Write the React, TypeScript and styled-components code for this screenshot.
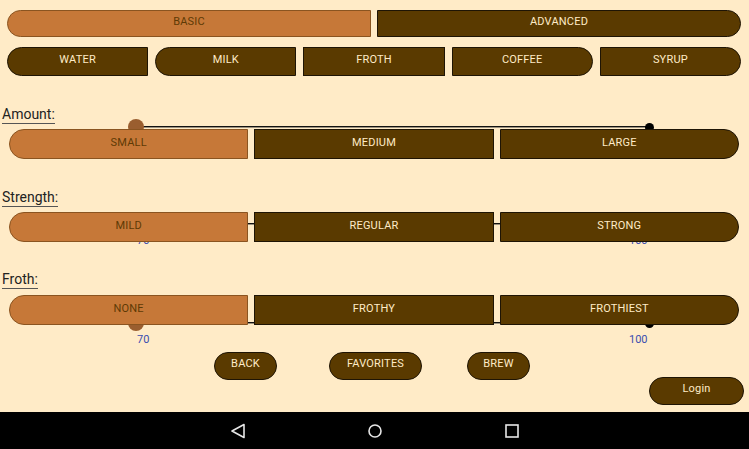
import React from 'react';
import styled, { createGlobalStyle, css } from 'styled-components';

const CREAM = '#FFEBC7';
const ORANGE = '#C67838';
const BROWN = '#5A3A00';
const INK = '#5E3A05';

type Round = 'left' | 'right' | 'none';

const GlobalStyle = createGlobalStyle`
  html, body {
    margin: 0;
    padding: 0;
    background: ${CREAM};
  }
  body {
    font-family: Roboto, "Noto Sans", "Liberation Sans", sans-serif;
  }
  * {
    box-sizing: border-box;
  }
`;

const Screen = styled.div`
  width: 749px;
  height: 449px;
  display: flex;
  flex-direction: column;
  background: ${CREAM};
  overflow: hidden;
`;

const Content = styled.div`
  height: 412px;
  display: flex;
  flex-direction: column;
`;

const roundCss = (round: Round, r: number) => {
  switch (round) {
    case 'left':
      return css`border-radius: ${r}px 0 0 ${r}px;`;
    case 'right':
      return css`border-radius: 0 ${r}px ${r}px 0;`;
    default:
      return css`border-radius: 0;`;
  }
};

const ToggleButton = styled.button<{ $active?: boolean; $round: Round; $h: number }>`
  position: relative;
  z-index: 1;
  height: ${(p) => p.$h}px;
  margin: 0;
  padding: 0 0 4px;
  font-family: Roboto, "Liberation Sans", sans-serif;
  font-size: 11px;
  letter-spacing: 0.2px;
  text-transform: uppercase;
  cursor: pointer;
  background: ${(p) => (p.$active ? ORANGE : BROWN)};
  color: ${(p) => (p.$active ? INK : CREAM)};
  border: 1px solid ${(p) => (p.$active ? '#8A5420' : '#1E1404')};
  ${(p) => roundCss(p.$round, p.$h / 2)}
`;

const TabRow = styled.div`
  display: grid;
  grid-template-columns: 1fr 1fr;
  gap: 6px;
  margin: 10px 8px 0 7px;
`;

const CategoryRow = styled.div`
  display: grid;
  grid-template-columns: repeat(5, 1fr);
  gap: 7px;
  margin: 10px 8px 0 7px;
`;

const Section = styled.section<{ $top: number }>`
  margin-top: ${(p) => p.$top}px;
  display: flex;
  flex-direction: column;
  align-items: flex-start;
`;

const FieldLabel = styled.span`
  margin-left: 2px;
  font-size: 14px;
  line-height: 17px;
  color: #222;
  border-bottom: 1px solid #555;
`;

const SegmentRow = styled.div<{ $top: number }>`
  position: relative;
  align-self: stretch;
  display: grid;
  grid-template-columns: repeat(3, 1fr);
  gap: 6px;
  margin-top: ${(p) => p.$top}px;
  padding: 0 10px 0 9px;
`;

const SliderLayer = styled.div<{ $y: number }>`
  position: absolute;
  z-index: 0;
  left: 0;
  right: 0;
  top: ${(p) => p.$y}px;
  height: 0;
`;

const Track = styled.div`
  position: absolute;
  left: 136px;
  width: 513px;
  top: -1px;
  height: 2px;
  border-top: 1px solid #111;
  border-bottom: 1px solid #9a907e;
`;

const Thumb = styled.div`
  position: absolute;
  left: 128px;
  top: -8px;
  width: 16px;
  height: 16px;
  border-radius: 50%;
  background: #9A5E2F;
`;

const EndDot = styled.div`
  position: absolute;
  left: 645px;
  top: -4px;
  width: 9px;
  height: 9px;
  border-radius: 50%;
  background: #000;
`;

const Value = styled.span<{ $x: number }>`
  position: absolute;
  left: ${(p) => p.$x}px;
  top: 10px;
  font-size: 11px;
  line-height: 13px;
  color: #3A4DB0;
`;

const Footer = styled.div`
  margin-top: 27px;
  display: flex;
  flex-direction: column;
`;

const ActionRow = styled.div`
  display: flex;
  padding-left: 214px;
`;

const PillButton = styled.button<{ $w: number; $ml?: number }>`
  width: ${(p) => p.$w}px;
  height: 28px;
  margin: 0 0 0 ${(p) => p.$ml ?? 0}px;
  padding: 0 0 5px;
  border-radius: 14px;
  border: 1px solid #1E1404;
  background: ${BROWN};
  color: ${CREAM};
  font-family: Roboto, "Liberation Sans", sans-serif;
  font-size: 11px;
  letter-spacing: 0.2px;
  cursor: pointer;
`;

const LoginRow = styled.div`
  display: flex;
  justify-content: flex-end;
  padding-right: 5px;
  margin-top: -3px;
`;

const NavBar = styled.nav`
  height: 37px;
  background: #000;
  display: flex;
  align-items: center;
  justify-content: center;
  gap: 113px;
`;

const NavIcon = styled.svg`
  width: 24px;
  height: 24px;
  display: block;
`;

interface ISliderProps {
  y: number;
  showValues?: boolean;
}

const Slider: React.FC<ISliderProps> = ({ y, showValues = true }) => (
  <SliderLayer $y={y}>
    <Track />
    <EndDot />
    <Thumb />
    {showValues && (
      <>
        <Value $x={137}>70</Value>
        <Value $x={629}>100</Value>
      </>
    )}
  </SliderLayer>
);

interface ISegmentProps {
  label: string;
  options: string[];
  selected: number;
  top: number;
  rowTop: number;
  sliderY: number;
  showValues?: boolean;
}

const SegmentField: React.FC<ISegmentProps> = ({
  label,
  options,
  selected,
  top,
  rowTop,
  sliderY,
  showValues,
}) => (
  <Section $top={top}>
    <FieldLabel>{label}</FieldLabel>
    <SegmentRow $top={rowTop}>
      <Slider y={sliderY} showValues={showValues} />
      {options.map((opt, i) => (
        <ToggleButton
          key={opt}
          $h={30}
          $active={i === selected}
          $round={i === 0 ? 'left' : i === options.length - 1 ? 'right' : 'none'}
        >
          {opt}
        </ToggleButton>
      ))}
    </SegmentRow>
  </Section>
);

const categories: { name: string; round: Round }[] = [
  { name: 'Water', round: 'left' },
  { name: 'Milk', round: 'left' },
  { name: 'Froth', round: 'none' },
  { name: 'Coffee', round: 'right' },
  { name: 'Syrup', round: 'right' },
];

export default function App() {
  return (
    <>
      <GlobalStyle />
      <Screen>
        <Content>
          <TabRow>
            <ToggleButton $h={27} $active $round="left">
              Basic
            </ToggleButton>
            <ToggleButton $h={27} $round="right">
              Advanced
            </ToggleButton>
          </TabRow>

          <CategoryRow>
            {categories.map((c) => (
              <ToggleButton key={c.name} $h={29} $round={c.round}>
                {c.name}
              </ToggleButton>
            ))}
          </CategoryRow>

          <SegmentField
            label="Amount:"
            options={['Small', 'Medium', 'Large']}
            selected={0}
            top={30}
            rowTop={5}
            sliderY={-2}
            showValues={false}
          />
          <SegmentField
            label="Strength:"
            options={['Mild', 'Regular', 'Strong']}
            selected={0}
            top={30}
            rowTop={5}
            sliderY={12}
          />
          <SegmentField
            label="Froth:"
            options={['None', 'Frothy', 'Frothiest']}
            selected={0}
            top={29}
            rowTop={6}
            sliderY={28}
          />

          <Footer>
            <ActionRow>
              <PillButton $w={63}>BACK</PillButton>
              <PillButton $w={93} $ml={52}>
                FAVORITES
              </PillButton>
              <PillButton $w={63} $ml={45}>
                BREW
              </PillButton>
            </ActionRow>
            <LoginRow>
              <PillButton $w={95}>Login</PillButton>
            </LoginRow>
          </Footer>
        </Content>

        <NavBar>
          <NavIcon viewBox="0 0 24 24">
            <path d="M18 5.5 L6 12 L18 18.5 Z" fill="none" stroke="#E6E6E6" strokeWidth="1.6" strokeLinejoin="round" />
          </NavIcon>
          <NavIcon viewBox="0 0 24 24">
            <circle cx="12" cy="12" r="6" fill="none" stroke="#E6E6E6" strokeWidth="1.6" />
          </NavIcon>
          <NavIcon viewBox="0 0 24 24">
            <rect x="6" y="6" width="12" height="12" fill="none" stroke="#E6E6E6" strokeWidth="1.6" />
          </NavIcon>
        </NavBar>
      </Screen>
    </>
  );
}
